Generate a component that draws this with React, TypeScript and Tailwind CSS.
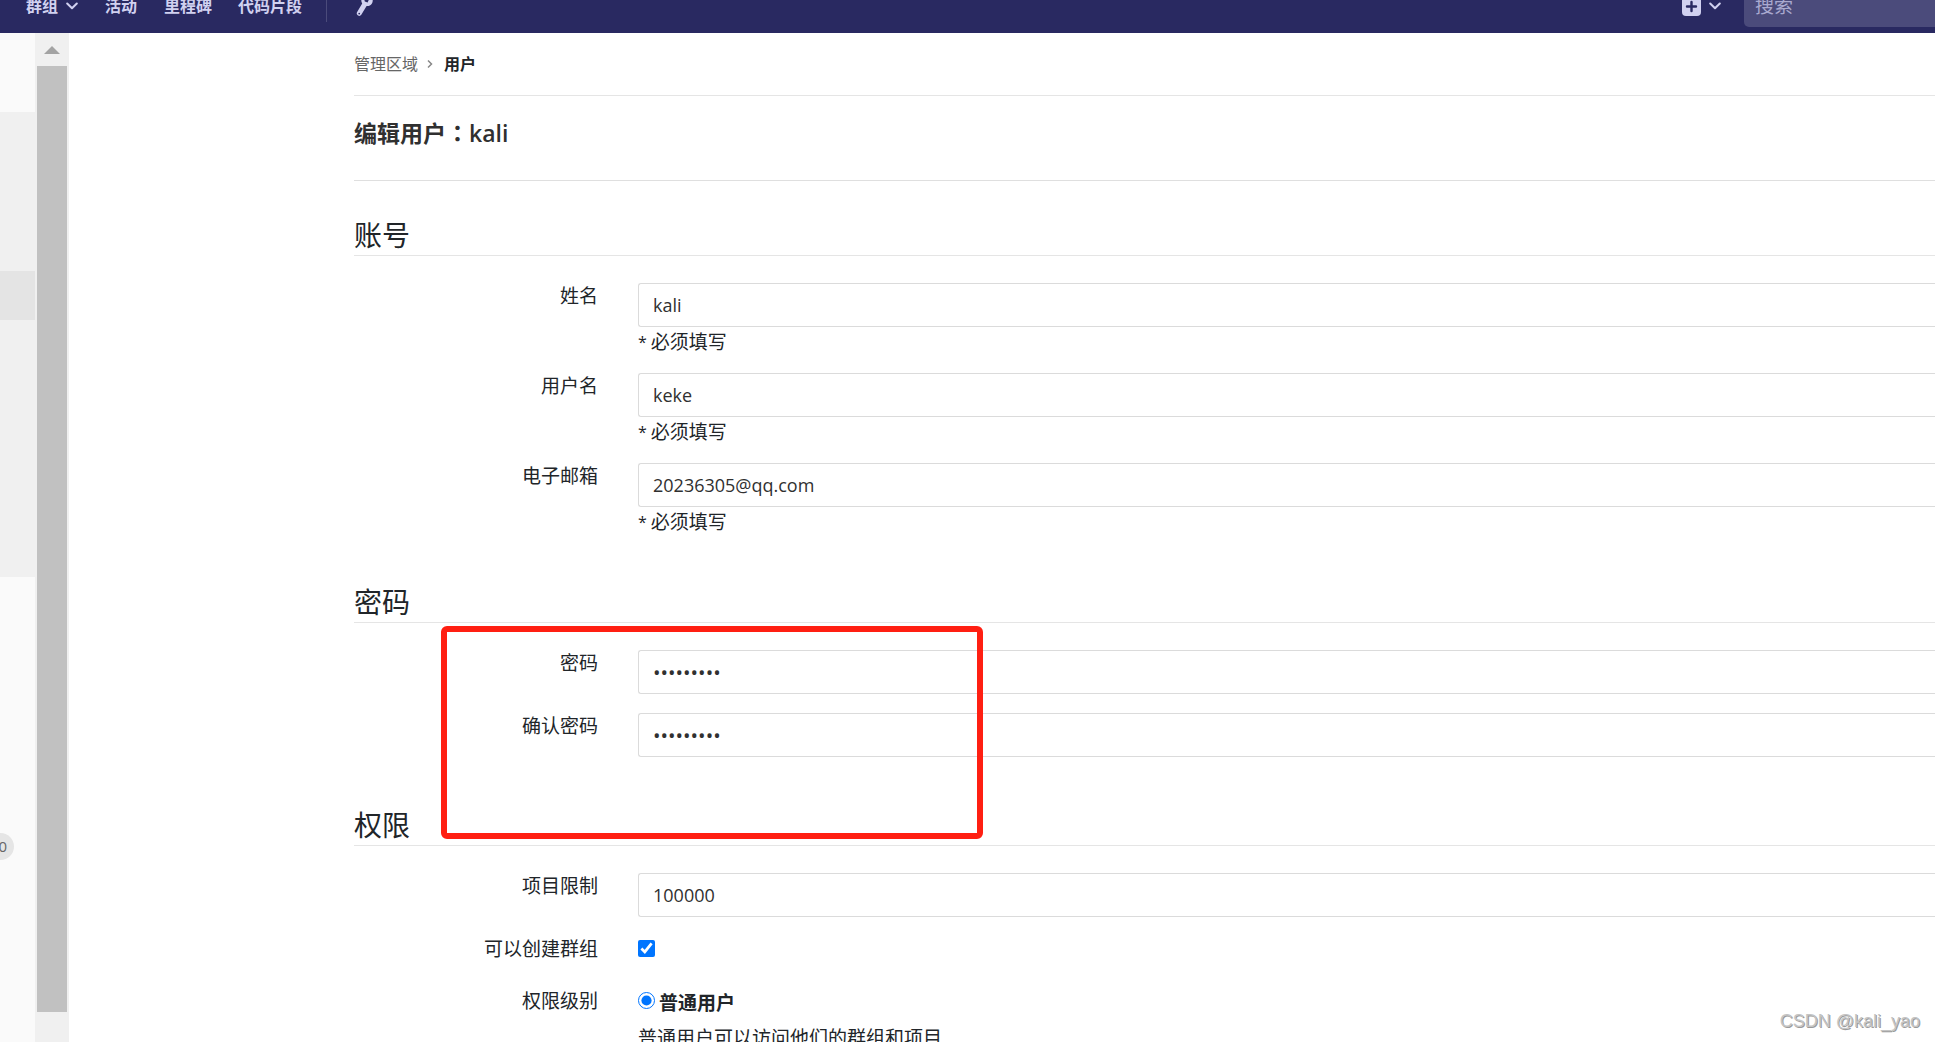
import React from 'react';

interface FieldProps {
  id: string;
  label: string;
  value: string;
  type?: string;
  required?: boolean;
}

const Field: React.FC<FieldProps> = ({ id, label, value, type = 'text', required }) => (
  <div className="flex gap-10 mb-[19px]">
    <label htmlFor={id} className="w-61 shrink-0 text-right leading-[26px]">
      {label}
    </label>
    <div className="flex-1">
      <input
        id={id}
        type={type}
        defaultValue={value}
        className={`block w-full h-11 px-3.5 border border-r-0 border-[#dbdbdb] rounded-l-[3px] bg-white text-[#303030] outline-none ${
          type === 'password' ? 'text-xl' : 'text-lg'
        }`}
      />
      {required && (
        <div className="flex gap-1 h-[27px] leading-[30px]">
          <span className="text-base leading-[30px]">*</span>
          <span>必须填写</span>
        </div>
      )}
    </div>
  </div>
);

const Section: React.FC<{ title: string; children: React.ReactNode }> = ({ title, children }) => (
  <fieldset className="mb-[22px]">
    <legend className="w-full h-12 mb-[27px] border-b border-[#e5e5e5] text-[28px] leading-[54px]">{title}</legend>
    {children}
  </fieldset>
);

const Chevron: React.FC = () => (
  <svg width="12" height="8" viewBox="0 0 12 8" fill="none" stroke="currentColor" strokeWidth="2" strokeLinecap="round" strokeLinejoin="round">
    <path d="M1.200 1.500 6 6.300l4.800-4.800" />
  </svg>
);

const App: React.FC = () => {
  return (
    <div className="h-screen flex flex-col overflow-hidden relative bg-white text-[#212529] text-[19px] font-['Open_Sans','Noto_Sans_CJK_SC',sans-serif]">
      {/* Top navigation */}
      <header className="h-[33px] shrink-0 flex items-end bg-[#292961] text-[#d1d1f0] overflow-hidden">
        <nav className="flex-1 h-[54px] flex items-center pl-[26px] text-base font-bold">
          <a href="#groups" className="flex items-center gap-2">
            群组
            <Chevron />
          </a>
          <a href="#activity" className="ml-[27px]">活动</a>
          <a href="#milestones" className="ml-[27px]">里程碑</a>
          <a href="#snippets" className="ml-[26px]">代码片段</a>
          <div className="w-px h-8 ml-6 bg-[#4b4b7b]" />
          <a href="#admin" aria-label="管理区域" className="ml-[29px]">
            <svg width="18" height="22" viewBox="0 0 18 22" fill="currentColor">
              <path
                fillRule="evenodd"
                d="M14.500 1.200a5.500 5.500 0 0 1 1.300 7.500c-1.200 1.800-3.200 2.600-5.200 2.300L5.300 19.800a2.500 2.500 0 0 1-4.300-2.500L6.200 8.400C5 6.600 5 4.300 6.200 2.500A5.500 5.500 0 0 1 10 0L8.200 3.800l.6 2.800 2.800.8zM3.200 17.700a.9.900 0 1 0 .01 1.800.9.900 0 0 0 0-1.800z"
              />
            </svg>
          </a>
        </nav>
        <div className="h-[54px] flex items-center">
          <button type="button" aria-label="新建" className="flex items-center gap-2 mr-[23px]">
            <svg width="19" height="19" viewBox="0 0 19 19">
              <rect width="19" height="19" rx="4" fill="#d1d1f0" />
              <path d="M9.500 5v9M5 9.500h9" stroke="#292961" strokeWidth="2.400" strokeLinecap="round" />
            </svg>
            <Chevron />
          </button>
          <input
            type="search"
            aria-label="搜索"
            placeholder="搜索"
            className="w-[191px] h-[42px] px-[11px] rounded-l-[5px] bg-[#4b4b7b] placeholder:text-[#a9a9cf] outline-none"
          />
        </div>
      </header>

      <div className="flex-1 flex min-h-0">
        {/* Sidebar edge */}
        <aside className="w-[35px] shrink-0 pt-[79px] bg-[#fafafa]">
          <div className="h-[159px] bg-[#f0f0f0]" />
          <div className="h-[49px] bg-[#e4e4e4]" />
          <div className="h-[257px] bg-[#f0f0f0]" />
          <span className="w-3.5 h-[27px] mt-64 pr-[7px] flex justify-end items-center rounded-r-full bg-[#e5e5e5] text-[#666] text-[15px]">
            0
          </span>
        </aside>

        {/* Scrollbar */}
        <div className="w-[34px] shrink-0 px-0.5 pb-[30px] flex flex-col bg-[#f0f0f0]">
          <div className="h-[33px] flex items-center justify-center">
            <svg width="16" height="8" viewBox="0 0 16 8" fill="#a3a3a3">
              <path d="M0 8 8 0l8 8z" />
            </svg>
          </div>
          <div className="flex-1 bg-[#c1c1c1]" />
        </div>

        <main className="flex-1 pl-[285px] relative overflow-hidden">
          <div className="h-[63px] flex items-center border-b border-[#e5e5e5] text-base">
            <a href="#admin" className="text-[#666]">管理区域</a>
            <svg width="6" height="10" viewBox="0 0 6 10" fill="none" stroke="#888" strokeWidth="1.500" className="ml-[9px] mr-[11px]">
              <path d="M1 1.500 4.500 5 1 8.500" />
            </svg>
            <a href="#users" className="font-semibold">用户</a>
          </div>

          <h3 className="h-[85px] pt-[22px] mb-[27px] border-b border-[#dfdfdf] text-[#303030] text-[23px] leading-7 font-semibold">
            编辑用户<span className="font-['Noto_Sans_CJK_TC',sans-serif]">：</span>kali
          </h3>

          <form>
            <Section title="账号">
              <Field id="name" label="姓名" value="kali" required />
              <Field id="username" label="用户名" value="keke" required />
              <Field id="email" label="电子邮箱" value="20236305@qq.com" required />
            </Section>

            <Section title="密码">
              <Field id="password" label="密码" value="kali12345" type="password" />
              <Field id="confirm" label="确认密码" value="kali12345" type="password" />
            </Section>

            <Section title="权限">
              <Field id="limit" label="项目限制" value="100000" />
              <div className="flex gap-10 mb-[26px]">
                <label htmlFor="can-create" className="w-61 text-right leading-[26px]">可以创建群组</label>
                <input id="can-create" type="checkbox" defaultChecked className="w-[17px] h-[17px] mt-1 accent-[#0075ff]" />
              </div>
              <div className="flex gap-10">
                <span className="w-61 text-right leading-[26px]">权限级别</span>
                <div>
                  <div className="flex gap-1">
                    <input id="regular" name="level" type="radio" defaultChecked className="w-[17px] h-[17px] mt-1 accent-[#0075ff]" />
                    <label htmlFor="regular" className="font-bold leading-[30px]">普通用户</label>
                  </div>
                  <p className="mt-1.5 leading-7">普通用户可以访问他们的群组和项目</p>
                </div>
              </div>
            </Section>
          </form>

          {/* Highlight frame over the password fields */}
          <div className="absolute left-[372px] top-[593px] w-[542px] h-[213px] border-6 border-[#ff1f12] rounded-md pointer-events-none" />
        </main>
      </div>

      <span className="absolute right-[15px] bottom-[7px] text-[#c4c4c4] text-lg leading-7 font-['Liberation_Sans',sans-serif] [text-shadow:1px_1px_0_#9a9a9a]">
        CSDN @kali_yao
      </span>
    </div>
  );
};

export default App;
